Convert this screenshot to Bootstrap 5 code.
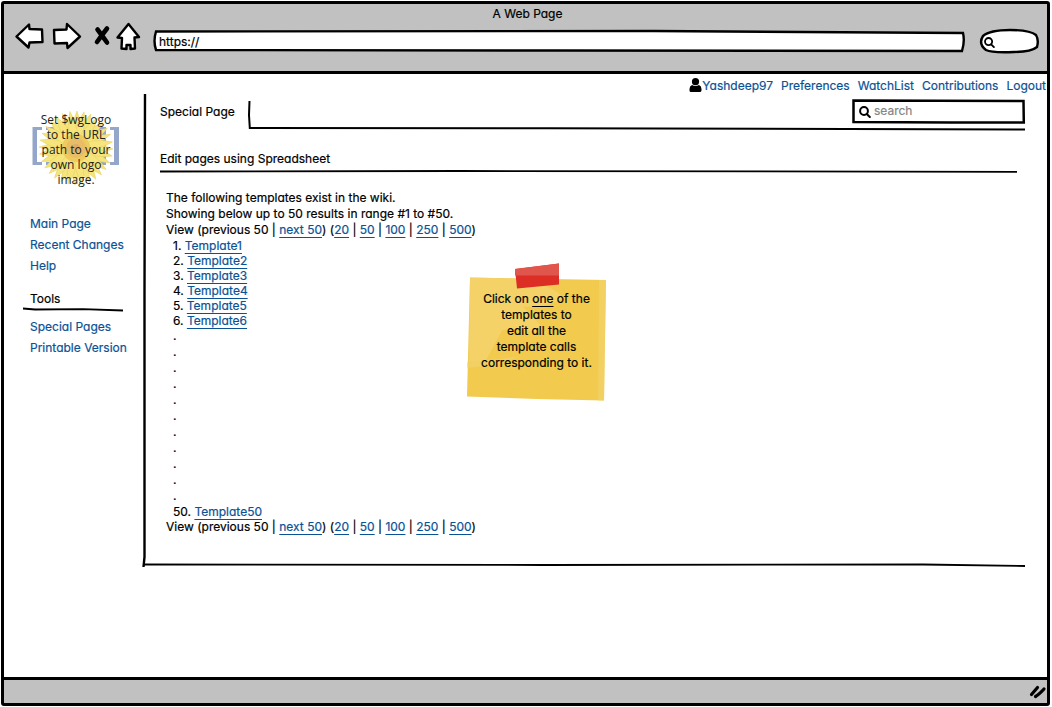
<!DOCTYPE html>
<html lang="en">
<head>
<meta charset="utf-8">
<meta name="viewport" content="width=device-width, initial-scale=1">
<title>A Web Page</title>
<link href="https://cdn.jsdelivr.net/npm/bootstrap@5.3.0/dist/css/bootstrap.min.css" rel="stylesheet">
<style>
  body { font: 12px/16px Inter, "Liberation Sans", sans-serif; font-feature-settings: "cv11", "calt" 0; color: #000; background: #fff; -webkit-text-stroke: .2px; }
  a { color: #0a5296; text-decoration: none; }
  svg { display: block; overflow: visible; }
  .page { padding: 1px 2px 1px 1px; }
  .frame { border: 3px solid #000; border-radius: 3px; }
  .chrome { background: #c1c1c1; }
  .topbar { border-bottom: 3px solid #000; height: 70px; padding: 2px 7px 0 11px; }
  .tool { border: 0; background: none; padding: 0; }
  .field { position: relative; }
  .field svg.shape { position: absolute; left: 0; top: 0; width: 100%; height: 100%; }
  .field input { position: relative; width: 100%; border: 0; background: none; outline: 0; padding: 0; display: block; height: 100%; color: #000; }
  .field input::placeholder { color: #858585; opacity: 1; }
  .address { height: 22px; margin: 8px 15px 0 13px; }
  .address input { padding-left: 6px; }
  .pill { width: 60px; height: 24px; margin-top: 7px; }
  .glass { position: absolute; }
  .userbar { padding: 4px 1px 0 0; gap: 8px; }
  .sidebar { width: 139px; flex: none; padding: 17px 0 0 19px; }
  .logo { position: relative; width: 90px; margin-left: 8px; text-align: center; font: 12px/15px "Open Sans", sans-serif; color: #222; -webkit-text-stroke: 0; padding: 1px 0 2px; margin-bottom: 24px; }
  .logo svg { position: absolute; left: 0; top: 0; z-index: -1; }
  .side-links { padding-left: 7px; line-height: 21px; }
  .side-title { padding-left: 7px; margin-top: 15px; }
  .side-rule { width: 100px; margin: 0 0 5px; height: 4px; }
  .panel { position: relative; height: 473px; margin-right: 22px; }
  .v-rule { position: absolute; left: 0; top: 0; width: 4px; height: 100%; }
  .b-rule { position: absolute; left: 0; bottom: 0; width: 100%; height: 4px; }
  .tabs { height: 37px; padding-left: 17px; }
  .tab { padding: 10px 0 0; width: 88px; flex: none; }
  .tab-edge { position: relative; }
  .tab-edge > svg { position: absolute; left: 0; top: 7px; width: 100%; height: 29px; }
  .search { width: 173px; height: 25px; margin: 5px 0 0 auto; }
  .search input { padding: 0 8px 2px 22px; }
  .title { font: inherit; margin: 0; padding: 20px 0 3px 17px; }
  .title-rule { margin: 0 8px 17px 17px; height: 3px; }
  .listing { width: 324px; flex: none; padding-left: 23px; white-space: nowrap; }
  .listing a, .note u { text-decoration: underline; text-underline-offset: 3px; text-decoration-thickness: 1px; }
  .results { padding-left: 7px; line-height: 15px; }
  .results .gap { line-height: 16px; }
  .note { position: relative; width: 139px; height: 139px; margin-top: 73px; text-align: center; padding-top: 28px; }
  .note svg { position: absolute; left: 0; top: 0; }
  .note p { position: relative; }
  .statusbar { border-top: 3px solid #000; height: 26px; padding: 5px 1px 0; }
</style>
</head>
<body>
<svg width="0" height="0" class="position-absolute">
  <symbol id="glass" viewBox="0 0 12 12"><circle cx="5" cy="5" r="3.9" fill="none" stroke="#000" stroke-width="2"/><path d="M7.8 8l3 3" stroke="#000" stroke-width="2" stroke-linecap="round"/></symbol>
</svg>
<div class="page min-vh-100 d-flex">
<div class="frame flex-fill d-flex flex-column">
  <header class="chrome topbar">
    <div class="text-center">A Web Page</div>
    <div class="d-flex align-items-start">
      <button class="tool" aria-label="Back"><svg width="29" height="28" viewBox="0 0 29 28"><path d="M1.500 14.500L14 2.500l.5 4.500 12.500.5.500 12.500-13 .5-1 5z" fill="#fff" stroke="#000" stroke-width="2.400" stroke-linejoin="round"/></svg></button>
      <button class="tool ms-2" aria-label="Forward"><svg width="30" height="28" viewBox="0 0 30 28"><path d="M2 8l12.500-.5.5-5.500 13 12.500L15.500 26l-.5-5-12.500.5z" fill="#fff" stroke="#000" stroke-width="2.400" stroke-linejoin="round"/></svg></button>
      <button class="tool ms-2" aria-label="Stop"><svg width="26" height="28" viewBox="0 0 26 28"><path d="M7.500 7.500Q11 12 17 20.500M17 6.500Q12 13 7 20" fill="none" stroke="#000" stroke-width="4.600" stroke-linecap="round"/></svg></button>
      <button class="tool" aria-label="Home"><svg width="24" height="28" viewBox="0 0 24 28"><path d="M12.500 2L23 15l-4.500.5.5 11-4.500.5V23h-4v4l-5-.5.5-10.500-4.500-.5z" fill="#fff" stroke="#000" stroke-width="2.400" stroke-linejoin="round"/></svg></button>
      <div class="field address flex-fill">
        <svg class="shape" viewBox="0 0 811 22" preserveAspectRatio="none"><path d="M3 1.500L500 1l309 2q2 8-1 18L400 20.500 3 20Q0 11 3 1.500z" fill="#fff" stroke="#000" stroke-width="2.400"/></svg>
        <input type="text" aria-label="Address" value="https://">
      </div>
      <div class="field pill">
        <svg class="shape" viewBox="0 0 60 24"><path d="M3 7Q10 1 30 1t26 5q3 5 1 12-6 5-23 5Q12 24 6 21-2 15 3 7z" fill="#fff" stroke="#000" stroke-width="2.400"/></svg>
        <svg class="glass" style="left:4px;top:8px" width="11" height="11"><use href="#glass"/></svg>
        <input type="search" aria-label="Web search" class="ps-4">
      </div>
    </div>
  </header>

  <nav class="userbar d-flex justify-content-end" aria-label="User">
    <a href="#" class="d-flex"><svg width="13" height="14" viewBox="0 0 13 14"><circle cx="6.500" cy="3.700" r="3.600" fill="#000"/><path d="M3 7q3.500 2 7 0 2.500 1 2.500 4v1.500Q12 14 11 14H2Q.5 14 .5 12.500V11Q.5 8 3 7z" fill="#000"/></svg>Yashdeep97</a>
    <a href="#">Preferences</a>
    <a href="#">WatchList</a>
    <a href="#">Contributions</a>
    <a href="#">Logout</a>
  </nav>

  <div class="d-flex flex-fill">
    <aside class="sidebar">
      <div class="logo">
        <svg width="90" height="77" viewBox="0 0 90 77">
          <defs><g id="petals" fill="#f5e57c" stroke="#e6d060" stroke-width=".5">
            <path id="p" d="M45 36Q37 20 46 0q7 20-1 36z"/>
            <use href="#p" transform="rotate(45 45 37)"/><use href="#p" transform="rotate(90 45 37)"/><use href="#p" transform="rotate(135 45 37)"/><use href="#p" transform="rotate(180 45 37)"/><use href="#p" transform="rotate(225 45 37)"/><use href="#p" transform="rotate(270 45 37)"/><use href="#p" transform="rotate(315 45 37)"/></g></defs>
          <path d="M11 16H1.500v38H11v-3H6V19h5zM15 16h9v38h-9v-3h5V19h-5zM79 16h9v38h-9v-3h4V19h-4zM66 16h9v38h-9z" fill="#94a7ca"/>
          <use href="#petals"/><use href="#petals" transform="rotate(22 45 37)"/><use href="#petals" transform="rotate(11 45 37)"/><use href="#petals" transform="rotate(34 45 37)"/>
          <circle cx="45" cy="37" r="14" fill="#eecb5c"/><circle cx="45" cy="37" r="10" fill="#e9bd68"/><circle cx="45" cy="37" r="4" fill="#dfab68"/>
        </svg>
        Set $wgLogo<br>to the URL<br>path to your<br>own logo<br>image.
      </div>
      <div class="side-links"><a href="#" class="d-block">Main Page</a><a href="#" class="d-block">Recent Changes</a><a href="#" class="d-block">Help</a></div>
      <div class="side-title">Tools</div>
      <svg class="side-rule" viewBox="0 0 100 4" preserveAspectRatio="none"><path d="M0 1.500L12 2.500 60 2.200 100 3.500" fill="none" stroke="#000" stroke-width="1.800"/></svg>
      <div class="side-links"><a href="#" class="d-block">Special Pages</a><a href="#" class="d-block">Printable Version</a></div>
    </aside>

    <main class="flex-fill">
      <div class="panel">
        <svg class="v-rule" viewBox="0 0 4 472" preserveAspectRatio="none"><path d="M2 0L1.500 200 1.500 462 .5 472" fill="none" stroke="#000" stroke-width="2.400"/></svg>
        <svg class="b-rule" viewBox="0 0 882 4" preserveAspectRatio="none"><path d="M0 1.500L400 2 780 1.500 882 3" fill="none" stroke="#000" stroke-width="1.800"/></svg>
        <div class="tabs d-flex">
          <div class="tab">Special Page</div>
          <div class="tab-edge flex-fill d-flex">
            <svg viewBox="0 0 777 29" preserveAspectRatio="none"><path d="M1.500 0L1 14l.8 13L300 27.200 777 28.500" fill="none" stroke="#000" stroke-width="2"/></svg>
            <div class="field search">
              <svg class="shape" viewBox="0 0 173 25" preserveAspectRatio="none"><path d="M1.500 1.500L171.500 2l.3 21.500L100 23.500 1.500 23z" fill="#fff" stroke="#000" stroke-width="2.500"/></svg>
              <svg class="glass" style="left:7px;top:7px" width="12" height="12"><use href="#glass"/></svg>
              <input type="search" placeholder="search" aria-label="Search">
            </div>
          </div>
        </div>
        <h1 class="title">Edit pages using Spreadsheet</h1>
        <div class="title-rule"><svg width="100%" height="3" viewBox="0 0 857 3" preserveAspectRatio="none"><path d="M0 1.500L300 1l557 .8" fill="none" stroke="#000" stroke-width="1.800"/></svg></div>
        <div class="d-flex">
          <div class="listing">
            <div>The following templates exist in the wiki.</div>
            <div>Showing below up to 50 results in range #1 to #50.</div>
            <div>View (previous 50 | <a href="#">next 50</a>) (<a href="#">20</a> | <a href="#">50</a> | <a href="#">100</a> | <a href="#">250</a> | <a href="#">500</a>)</div>
            <ul class="results list-unstyled m-0">
              <li>1. <a href="#">Template1</a></li>
              <li>2. <a href="#">Template2</a></li>
              <li>3. <a href="#">Template3</a></li>
              <li>4. <a href="#">Template4</a></li>
              <li>5. <a href="#">Template5</a></li>
              <li>6. <a href="#">Template6</a></li>
              <li class="gap">.<br>.<br>.<br>.<br>.<br>.<br>.<br>.<br>.<br>.<br>.</li>
              <li>50. <a href="#">Template50</a></li>
            </ul>
            <div>View (previous 50 | <a href="#">next 50</a>) (<a href="#">20</a> | <a href="#">50</a> | <a href="#">100</a> | <a href="#">250</a> | <a href="#">500</a>)</div>
          </div>
          <div class="note">
            <svg width="139" height="139" viewBox="0 0 139 139">
              <path d="M3 14.500L139 17l-2 120.500L70 136 0 133.500z" fill="#f2ca4e"/>
              <path d="M3 14.500l45 1q40 6 48 20-20 10-40 8 20 20 24 28-30-8-45-4l-16 30L2 99z" fill="#f4d36f" opacity=".8"/>
              <path d="M139 17l-2 120.500h-6L132 17zM0 99l50-5-15 7-35 4z" fill="#f4d36f" opacity=".6"/>
              <path d="M48 6L92 .5V21.500L50 25.500z" fill="#dc2e25"/><path d="M48 6L92 .5V12.500H48z" fill="#e0554c"/>
            </svg>
            <p class="m-0">Click on <u>one</u> of the<br>templates to<br>edit all the<br>template calls<br>corresponding to it.</p>
          </div>
        </div>
      </div>
    </main>
  </div>

  <footer class="chrome statusbar d-flex justify-content-end">
    <svg width="16" height="14" viewBox="0 0 16 14"><path d="M1.500 9.500L7.500 2.500M5.500 11.500Q9 9.500 14 4" fill="none" stroke="#000" stroke-width="3.200" stroke-linecap="round"/></svg>
  </footer>
</div>
</div>
<script src="https://cdn.jsdelivr.net/npm/bootstrap@5.3.0/dist/js/bootstrap.bundle.min.js"></script>
</body>
</html>
